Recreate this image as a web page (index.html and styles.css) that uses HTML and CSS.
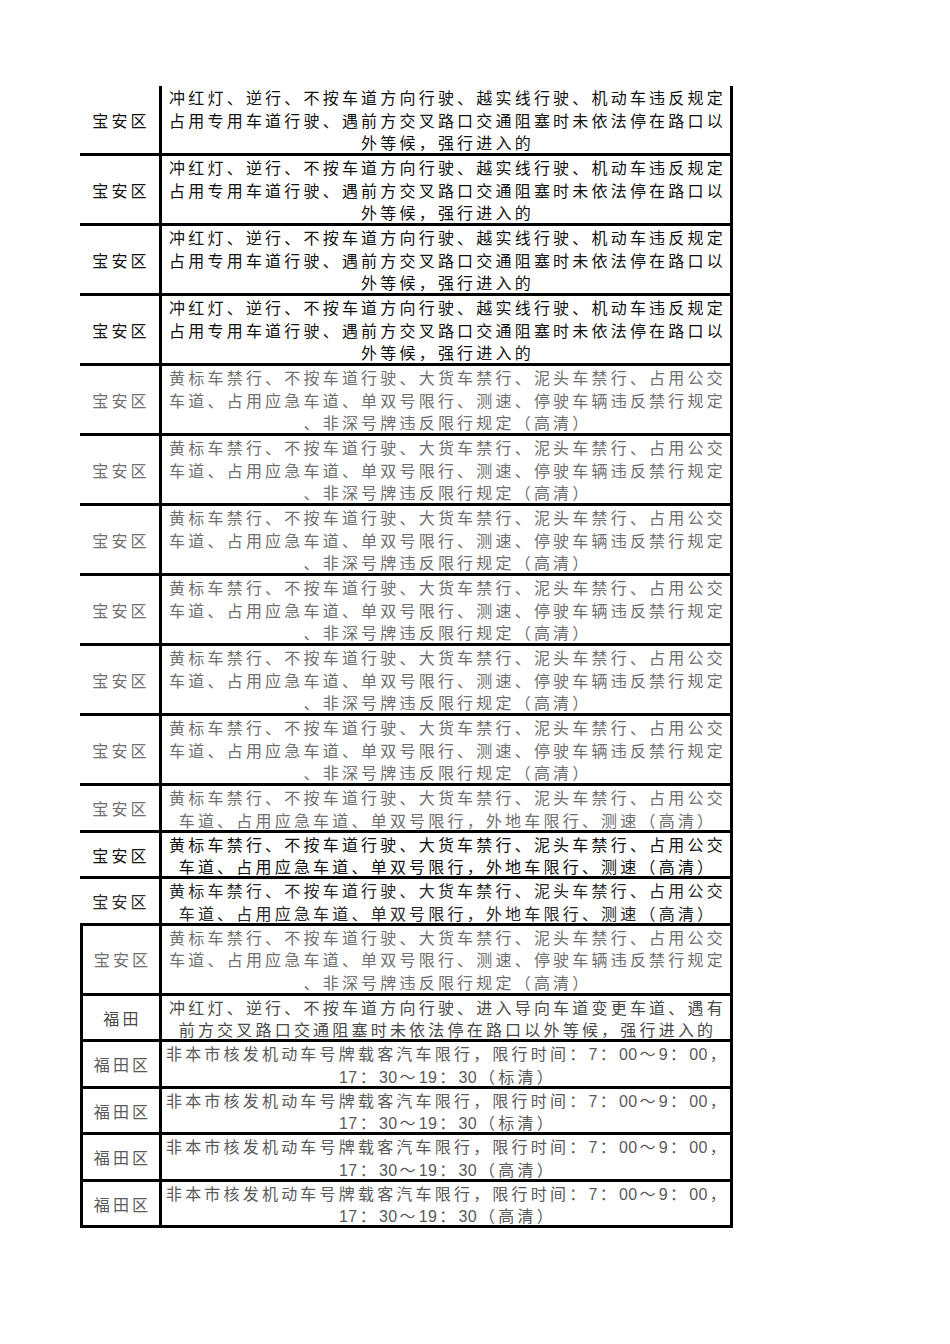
FILE: index.html
```html
<!DOCTYPE html>
<html lang="zh-CN">
<head>
<meta charset="utf-8">
<title>违法行为列表</title>
<link rel="stylesheet" href="styles.css">
</head>
<body>
<div class="sheet">
  <div class="row r3 ink-black"><div class="area">宝安区</div><div class="desc"><span class="ln">冲红灯、逆行、不按车道方向行驶、越实线行驶、机动车违反规定</span><span class="ln">占用专用车道行驶、遇前方交叉路口交通阻塞时未依法停在路口以</span><span class="ln">外等候，强行进入的</span></div></div>
  <div class="row r3 ink-black"><div class="area">宝安区</div><div class="desc"><span class="ln">冲红灯、逆行、不按车道方向行驶、越实线行驶、机动车违反规定</span><span class="ln">占用专用车道行驶、遇前方交叉路口交通阻塞时未依法停在路口以</span><span class="ln">外等候，强行进入的</span></div></div>
  <div class="row r3 ink-black"><div class="area">宝安区</div><div class="desc"><span class="ln">冲红灯、逆行、不按车道方向行驶、越实线行驶、机动车违反规定</span><span class="ln">占用专用车道行驶、遇前方交叉路口交通阻塞时未依法停在路口以</span><span class="ln">外等候，强行进入的</span></div></div>
  <div class="row r3 ink-black"><div class="area">宝安区</div><div class="desc"><span class="ln">冲红灯、逆行、不按车道方向行驶、越实线行驶、机动车违反规定</span><span class="ln">占用专用车道行驶、遇前方交叉路口交通阻塞时未依法停在路口以</span><span class="ln">外等候，强行进入的</span></div></div>
  <div class="row r3 ink-gray"><div class="area">宝安区</div><div class="desc"><span class="ln">黄标车禁行、不按车道行驶、大货车禁行、泥头车禁行、占用公交</span><span class="ln">车道、占用应急车道、单双号限行、测速、停驶车辆违反禁行规定</span><span class="ln">、非深号牌违反限行规定（高清）</span></div></div>
  <div class="row r3 ink-gray"><div class="area">宝安区</div><div class="desc"><span class="ln">黄标车禁行、不按车道行驶、大货车禁行、泥头车禁行、占用公交</span><span class="ln">车道、占用应急车道、单双号限行、测速、停驶车辆违反禁行规定</span><span class="ln">、非深号牌违反限行规定（高清）</span></div></div>
  <div class="row r3 ink-gray"><div class="area">宝安区</div><div class="desc"><span class="ln">黄标车禁行、不按车道行驶、大货车禁行、泥头车禁行、占用公交</span><span class="ln">车道、占用应急车道、单双号限行、测速、停驶车辆违反禁行规定</span><span class="ln">、非深号牌违反限行规定（高清）</span></div></div>
  <div class="row r3 ink-gray"><div class="area">宝安区</div><div class="desc"><span class="ln">黄标车禁行、不按车道行驶、大货车禁行、泥头车禁行、占用公交</span><span class="ln">车道、占用应急车道、单双号限行、测速、停驶车辆违反禁行规定</span><span class="ln">、非深号牌违反限行规定（高清）</span></div></div>
  <div class="row r3 ink-gray"><div class="area">宝安区</div><div class="desc"><span class="ln">黄标车禁行、不按车道行驶、大货车禁行、泥头车禁行、占用公交</span><span class="ln">车道、占用应急车道、单双号限行、测速、停驶车辆违反禁行规定</span><span class="ln">、非深号牌违反限行规定（高清）</span></div></div>
  <div class="row r3 ink-gray"><div class="area">宝安区</div><div class="desc"><span class="ln">黄标车禁行、不按车道行驶、大货车禁行、泥头车禁行、占用公交</span><span class="ln">车道、占用应急车道、单双号限行、测速、停驶车辆违反禁行规定</span><span class="ln">、非深号牌违反限行规定（高清）</span></div></div>
  <div class="row r2 ink-gray"><div class="area">宝安区</div><div class="desc"><span class="ln">黄标车禁行、不按车道行驶、大货车禁行、泥头车禁行、占用公交</span><span class="ln">车道、占用应急车道、单双号限行，外地车限行、测速（高清）</span></div></div>
  <div class="row r2 ink-black"><div class="area">宝安区</div><div class="desc"><span class="ln">黄标车禁行、不按车道行驶、大货车禁行、泥头车禁行、占用公交</span><span class="ln">车道、占用应急车道、单双号限行，外地车限行、测速（高清）</span></div></div>
  <div class="row r2 ink-dark"><div class="area">宝安区</div><div class="desc"><span class="ln">黄标车禁行、不按车道行驶、大货车禁行、泥头车禁行、占用公交</span><span class="ln">车道、占用应急车道、单双号限行，外地车限行、测速（高清）</span></div></div>
  <div class="row r3 ink-gray boxed"><div class="area">宝安区</div><div class="desc"><span class="ln">黄标车禁行、不按车道行驶、大货车禁行、泥头车禁行、占用公交</span><span class="ln">车道、占用应急车道、单双号限行、测速、停驶车辆违反禁行规定</span><span class="ln">、非深号牌违反限行规定（高清）</span></div></div>
  <div class="row r2 ink-mid boxed"><div class="area">福田</div><div class="desc"><span class="ln">冲红灯、逆行、不按车道方向行驶、进入导向车道变更车道、遇有</span><span class="ln">前方交叉路口交通阻塞时未依法停在路口以外等候，强行进入的</span></div></div>
  <div class="row r2 ink-soft boxed"><div class="area">福田区</div><div class="desc"><span class="ln">非本市核发机动车号牌载客汽车限行，限行时间：<span class="num">7</span>：<span class="num">00</span>～<span class="num">9</span>：<span class="num">00</span>，</span><span class="ln"><span class="num">17</span>：<span class="num">30</span>～<span class="num">19</span>：<span class="num">30</span>（标清）</span></div></div>
  <div class="row r2 ink-soft boxed"><div class="area">福田区</div><div class="desc"><span class="ln">非本市核发机动车号牌载客汽车限行，限行时间：<span class="num">7</span>：<span class="num">00</span>～<span class="num">9</span>：<span class="num">00</span>，</span><span class="ln"><span class="num">17</span>：<span class="num">30</span>～<span class="num">19</span>：<span class="num">30</span>（标清）</span></div></div>
  <div class="row r2 ink-soft boxed"><div class="area">福田区</div><div class="desc"><span class="ln">非本市核发机动车号牌载客汽车限行，限行时间：<span class="num">7</span>：<span class="num">00</span>～<span class="num">9</span>：<span class="num">00</span>，</span><span class="ln"><span class="num">17</span>：<span class="num">30</span>～<span class="num">19</span>：<span class="num">30</span>（高清）</span></div></div>
  <div class="row r2 ink-soft boxed"><div class="area">福田区</div><div class="desc"><span class="ln">非本市核发机动车号牌载客汽车限行，限行时间：<span class="num">7</span>：<span class="num">00</span>～<span class="num">9</span>：<span class="num">00</span>，</span><span class="ln"><span class="num">17</span>：<span class="num">30</span>～<span class="num">19</span>：<span class="num">30</span>（高清）</span></div></div>
</div>
</body>
</html>
```

FILE: styles.css
```css
html, body {
  margin: 0;
  padding: 0;
  background: #ffffff;
}

body {
  font-family: "Noto Sans CJK SC", "Liberation Sans", sans-serif;
  font-size: 16px;
}

.sheet {
  width: 653px;
  margin: 86px 0 0 80px;
  display: flex;
  flex-direction: column;
}

.row {
  display: grid;
  grid-template-columns: 1fr 571px;
  box-sizing: border-box;
  border-bottom: 3px solid #000;
  overflow: visible;
}

.r3 { height: 70px; }
.r2 { height: 46.5px; }

.boxed {
  border-left: 3px solid #000;
}

.area,
.desc {
  display: flex;
  flex-direction: column;
  align-items: center;
  justify-content: center;
  line-height: 22.5px;
  letter-spacing: 3.2px;
  white-space: nowrap;
  overflow: visible;
}

.area {
  border-right: 3px solid #000;
  padding-left: 3px;
}

.desc {
  border-right: 3px solid #000;
  padding-left: 3px;
}

.ln {
  display: block;
  height: 22.5px;
  flex: none;
  text-align: center;
}

.num {
  font-family: "Liberation Sans", "DejaVu Sans", sans-serif;
  line-height: 0;
  letter-spacing: 0.4px;
  padding-right: 2px;
}

.ink-black { color: #111; }
.ink-dark { color: #2a2a2a; }
.ink-gray { color: #707070; }
.ink-mid { color: #4a4a4a; }
.ink-soft { color: #5a5a5a; }
```
